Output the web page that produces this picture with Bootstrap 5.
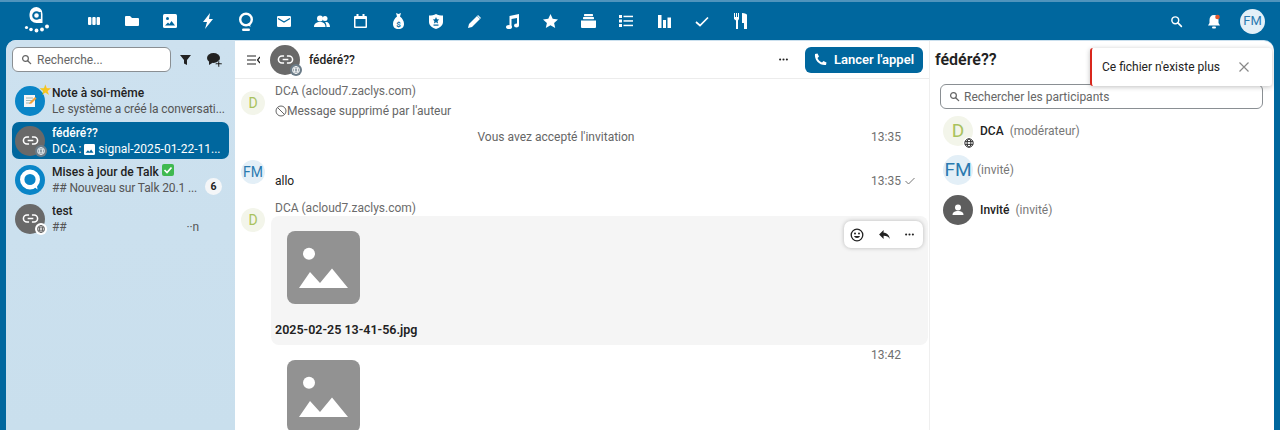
<!DOCTYPE html>
<html lang="fr">
<head>
<meta charset="utf-8">
<title>Talk</title>
<link href="https://cdn.jsdelivr.net/npm/bootstrap@5.3.0/dist/css/bootstrap.min.css" rel="stylesheet">
<style>
html,body{height:430px;overflow:hidden}
body{background:#00679e;font-family:Roboto,"Liberation Sans",sans-serif;font-size:12px;color:#222;border-top:2px solid #4f94bd}
.topbar{height:38px;color:#fff}
.logo-cell{width:75px}
.app-cell{width:38px;height:38px}
.right-cell{width:38px;height:38px}
.right-zone{padding-right:15px}
.me-av{width:25px;height:25px;border-radius:50%;background:#e3f0f8;color:#2a7ab0;font-size:13px}
.bell-gap{margin-right:7px}
.shell{height:390px;margin:0 6px;background:#cbe0ee;border-radius:10px 10px 0 0;overflow:hidden;position:relative}
.side{width:229px;flex:none;padding:7px 6px 0 6px;background:linear-gradient(#cde1ef,#c9dfed)}
.side-search{height:25px;width:159px;flex:none;border:1px solid #8a8f93;border-radius:6px;background:#fff;color:#666;padding-left:8px;gap:5px;font-size:12px}
.side-tools{height:25px}
.tool-cell{width:29px;flex:none}
.conv{height:37px;border-radius:7px;margin-top:2px;padding:0 6px 0 3px;gap:7px;color:#222}
.conv-first{margin-top:10px;padding-right:0}
.conv.on{background:#00679e;color:#fff;margin-top:3px}
.conv-sub{color:#555;font-size:12px;line-height:16px;white-space:nowrap;letter-spacing:-.12px}
.conv.on .conv-sub{color:#fff;letter-spacing:0}
.conv-title{font-weight:500;font-size:12px;line-height:16px;white-space:nowrap}
.round30{width:30px;height:30px;border-radius:50%;flex:none;position:relative}
.grey-av{background:#696969;color:#fff}
.blue-av{background:#0a85c7;color:#fff}
.corner{position:absolute;right:-2px;bottom:-1px;width:12px;height:12px;border-radius:50%;background:#fff;color:#555}
.corner.dark{background:#6b7c88}
.star{position:absolute;right:-7px;top:-3px;color:#f6c51e;font-size:15px;line-height:15px}
.pill{width:17px;height:17px;border-radius:50%;background:#f4f6f8;font-size:10.5px;font-weight:700;color:#222;flex:none;margin-top:14px;margin-right:1px}
.mid{width:694px;flex:none;background:#fff;margin-top:1px}
.mid-head{height:38px;flex:none;border-bottom:1px solid #ececec;padding:0 6px 0 12px}
.side-toggle{margin-right:10px}
.chat-name{margin-left:9px;font-weight:500}
.call-btn{height:26px;width:118px;border-radius:6px;background:#00679e;color:#fff;font-weight:600;font-size:13px;gap:7px;border:0}
.msgs{position:relative;padding-left:6px}
.msg-av{width:24px;height:24px;border-radius:50%;flex:none;font-size:14px}
.av-d{background:#f3f5ea;color:#a9c25d}
.av-fm{background:#e3eff7;color:#2a7ab0}
.gutter{width:34px;flex:none}
.author{color:#6b6b6b;font-size:12px;line-height:18px}
.muted-txt{color:#666;font-size:12px}
.stamp{width:57px;color:#6f6f6f;font-size:12px;flex:none;margin-right:1px}
.file-box{width:657px;height:129px;margin-left:-4px;background:#f5f5f5;border-radius:8px;padding:15px 0 0 4px;position:relative}
.thumb{margin-left:12px;display:block}
.fname{font-weight:600;font-size:12.5px;color:#222;margin-top:17px}
.msg-tools{position:absolute;right:5px;top:5px;width:79px;height:27px;background:#fff;border-radius:7px;box-shadow:0 0 4px rgba(0,0,0,.25);padding:0 8px 0 6px}
.panel{width:345px;flex:none;background:#fff;margin-top:1px;border-left:1px solid #efefef;border-top-right-radius:10px;padding-left:5px}
.panel-title{font-weight:600;font-size:16px;height:37px;color:#222}
.part-search{height:25px;width:323px;margin:6px 0 2px 5px;border:1px solid #8a8f93;border-radius:6px;color:#666;padding-left:8px;gap:4px;font-size:12px}
.part-row{height:40px;margin-left:8px;gap:6px}
.part-row.tight{gap:4px;margin-top:-1px}
.part-name{font-weight:500;color:#222;font-size:12px;margin-left:1px}
.part-role{color:#777;font-size:12px}
.av-big-d{font-size:19px}
.av-big-fm{font-size:19px}
.av-guest{background:#5e5e5e}
.globe-dark{position:absolute;right:-2px;bottom:-3px;width:12px;height:12px;color:#333;background:#fff;border-radius:50%}
.toast-box{position:absolute;left:1084px;top:8px;width:182px;height:38px;background:#fff;border-left:2px solid #d9261c;border-radius:3px;box-shadow:0 1px 5px rgba(0,0,0,.25);padding:0 23px 0 10px;color:#222;font-size:12px}
.row-h43{height:43px}.row-h30{height:30px}.row-h47{height:47px}
.first-av{margin-top:12px}
.first-txt{padding-top:3px}
.del-line{margin-top:2px}
.fm-top{margin-top:8px}
.d-top{margin-top:9px}
.author-2{height:17px;line-height:18px}
.late{height:12px;margin-top:3px;line-height:15px}
.allo-row{padding-bottom:9px}
</style>
</head>
<body>
<svg width="0" height="0" class="d-block position-absolute">
<defs>
<symbol id="i-link" viewBox="0 0 24 24"><path fill="none" stroke="currentColor" stroke-width="2.2" d="M10 7H7a5 5 0 0 0 0 10h3M14 7h3a5 5 0 0 1 0 10h-3M8 12h8"/></symbol>
<symbol id="i-globe" viewBox="0 0 12 12"><g fill="none" stroke="currentColor" stroke-width="1"><circle cx="6" cy="6" r="4.2"/><ellipse cx="6" cy="6" rx="1.9" ry="4.2"/><path d="M2 4.6h8M2 7.4h8"/></g></symbol>
<symbol id="i-search" viewBox="0 0 16 16"><circle cx="6.5" cy="6.5" r="4.2" fill="none" stroke="currentColor" stroke-width="1.8"/><path d="M9.7 9.7L14 14" stroke="currentColor" stroke-width="2" stroke-linecap="round"/></symbol>
<symbol id="i-dots" viewBox="0 0 14 4"><circle cx="2.5" cy="2" r="1.4" fill="currentColor"/><circle cx="7" cy="2" r="1.4" fill="currentColor"/><circle cx="11.5" cy="2" r="1.4" fill="currentColor"/></symbol>
<symbol id="i-image" viewBox="0 0 73 73"><rect width="73" height="73" rx="8" fill="#929292"/><circle cx="22" cy="22.700" r="6" fill="#fff"/><path d="M12 57L23 41l10 11 12-14.500L61 57z" fill="#fff"/></symbol>
</defs>
</svg>

<header class="topbar d-flex align-items-center">
  <div class="logo-cell d-flex">
    <svg width="26" height="30" viewBox="0 0 26 30" class="ms-4"><path d="M12.500 1a7 7 0 0 0-7 7v2a7 7 0 0 0 7 7h6V8a6.500 6.500 0 0 0-6-7z" fill="#fff"/><circle cx="12.500" cy="9.500" r="3.300" fill="none" stroke="#00679e" stroke-width="2"/><path d="M16 6v7" stroke="#00679e" stroke-width="1.600"/><g fill="#fff"><circle cx="2.500" cy="21.500" r="1.600"/><circle cx="7" cy="23.500" r="1.800"/><circle cx="12.500" cy="24.500" r="1.900"/><circle cx="18" cy="23.500" r="1.900"/><circle cx="23" cy="20.500" r="2"/></g></svg>
  </div>
  <nav class="d-flex align-items-center flex-grow-1">
    <div class="app-cell d-flex align-items-center justify-content-center"><svg width="14" height="12" viewBox="0 0 14 12" fill="#fff"><rect x="1" y="2" width="3.400" height="8" rx="1"/><rect x="5.300" y="2" width="3.400" height="8" rx="1"/><rect x="9.600" y="2" width="3.400" height="8" rx="1"/></svg></div>
    <div class="app-cell d-flex align-items-center justify-content-center"><svg width="14" height="12" viewBox="0 0 14 12" fill="#fff"><path d="M0 2a1 1 0 0 1 1-1h4l2 2h6a1 1 0 0 1 1 1v6a1 1 0 0 1-1 1H1a1 1 0 0 1-1-1z"/></svg></div>
    <div class="app-cell d-flex align-items-center justify-content-center"><svg width="14" height="14" viewBox="0 0 14 14"><rect width="14" height="14" rx="1.500" fill="#fff"/><circle cx="4.500" cy="4.500" r="1.500" fill="#00679e"/><path d="M2 11.500l3-3 1.500 1.500 2-3 3.500 4.500z" fill="#00679e"/></svg></div>
    <div class="app-cell d-flex align-items-center justify-content-center"><svg width="12" height="16" viewBox="0 0 12 16" fill="#fff"><path d="M8 0L1 9h4l-2 7 8-10H7z"/></svg></div>
    <div class="app-cell d-flex align-items-center justify-content-center flex-column"><svg width="16" height="19" viewBox="0 0 16 19"><circle cx="8" cy="7.500" r="5.800" fill="none" stroke="#fff" stroke-width="2.400"/><path d="M9 12l3.500 3-.5-4z" fill="#fff"/><rect x="4" y="16.500" width="8" height="2.500" rx="1.200" fill="#fff"/></svg></div>
    <div class="app-cell d-flex align-items-center justify-content-center"><svg width="14" height="11" viewBox="0 0 14 11"><rect width="14" height="11" rx="1.300" fill="#fff"/><path d="M1 2.500l6 3.500 6-3.500" fill="none" stroke="#00679e" stroke-width="1.300"/></svg></div>
    <div class="app-cell d-flex align-items-center justify-content-center"><svg width="16" height="13" viewBox="0 0 16 13" fill="#fff"><circle cx="6" cy="3.500" r="3"/><circle cx="11" cy="3.500" r="2.500"/><path d="M0 12c0-3.500 2.500-5 6-5s5.500 1.500 5.500 5zM12 7c2.500 0 4 2 4 5h-3.500c0-2-.5-4-1.500-4.800z"/></svg></div>
    <div class="app-cell d-flex align-items-center justify-content-center"><svg width="13" height="14" viewBox="0 0 13 14"><path d="M1 2h11a1 1 0 0 1 1 1v10a1 1 0 0 1-1 1H1a1 1 0 0 1-1-1V3a1 1 0 0 1 1-1z" fill="#fff"/><rect x="1.500" y="5" width="10" height="7.500" fill="#00679e"/><rect x="2.500" y="0" width="2" height="3" fill="#fff"/><rect x="8.500" y="0" width="2" height="3" fill="#fff"/></svg></div>
    <div class="app-cell d-flex align-items-center justify-content-center"><svg width="11" height="16" viewBox="0 0 11 16"><path d="M3 0l2.500 1L8 0 7 3.500c2.500 2 4 4.500 4 7.500 0 3-2 5-5.500 5S0 14 0 11c0-3 1.500-5.500 4-7.500z" fill="#fff"/><text x="5.500" y="13.500" text-anchor="middle" font-size="8" font-weight="700" fill="#00679e">$</text></svg></div>
    <div class="app-cell d-flex align-items-center justify-content-center"><svg width="14" height="15" viewBox="0 0 14 15"><path d="M0 1.500C2.500 1.500 5 1 7 0c2 1 4.500 1.500 7 1.500V8c0 3.500-3.500 6-7 7-3.500-1-7-3.500-7-7z" fill="#fff"/><path d="M7 3l1 2.200 2.300.3-1.700 1.600.4 2.300L7 8.300 5 9.400l.4-2.300-1.700-1.600L6 5.200z" fill="#00679e"/><rect x="4.500" y="10.500" width="5" height="1.200" fill="#00679e"/></svg></div>
    <div class="app-cell d-flex align-items-center justify-content-center"><svg width="13" height="13" viewBox="0 0 13 13" fill="#fff"><path d="M0 13l1-4L9 1l3 3-8 8z"/><path d="M10 0l3 3-.7.7-3-3z"/></svg></div>
    <div class="app-cell d-flex align-items-center justify-content-center"><svg width="13" height="15" viewBox="0 0 13 15" fill="#fff"><path d="M3.500 2L13 0v11.500h-2V4L5.500 5v8h-2z"/><ellipse cx="3" cy="13" rx="3" ry="2"/><ellipse cx="10.500" cy="11.500" rx="2.500" ry="2"/></svg></div>
    <div class="app-cell d-flex align-items-center justify-content-center"><svg width="15" height="14" viewBox="0 0 15 14" fill="#fff"><path d="M7.500 0l2.200 4.800 5.300.6-3.900 3.500 1.100 5.100-4.700-2.700L2.800 14l1.100-5.100L0 5.400l5.300-.6z"/></svg></div>
    <div class="app-cell d-flex align-items-center justify-content-center"><svg width="15" height="14" viewBox="0 0 15 14" fill="#fff"><rect x="3" y="0" width="9" height="2.200" rx=".6"/><rect x="2" y="3" width="11" height="2.200" rx=".6"/><path d="M0 6.500h15V13a1 1 0 0 1-1 1H1a1 1 0 0 1-1-1z"/></svg></div>
    <div class="app-cell d-flex align-items-center justify-content-center"><svg width="14" height="12" viewBox="0 0 14 12" fill="#fff"><rect y="0" width="3" height="3"/><rect x="4.500" y=".7" width="9.500" height="1.500"/><rect y="4.500" width="3" height="3"/><rect x="4.500" y="5.200" width="9.500" height="1.500"/><rect y="9" width="3" height="3"/><rect x="4.500" y="9.700" width="9.500" height="1.500"/></svg></div>
    <div class="app-cell d-flex align-items-center justify-content-center"><svg width="13" height="13" viewBox="0 0 13 13" fill="#fff"><rect width="3.500" height="13"/><rect x="5" y="5" width="3" height="8"/><rect x="9.500" y="2.500" width="3.500" height="10.500"/></svg></div>
    <div class="app-cell d-flex align-items-center justify-content-center"><svg width="14" height="11" viewBox="0 0 14 11"><path d="M1 6l4 3.500L13 1.500" fill="none" stroke="#fff" stroke-width="1.700"/></svg></div>
    <div class="app-cell d-flex align-items-center justify-content-center"><svg width="13" height="16" viewBox="0 0 13 16" fill="#fff"><path d="M0 0h1v4h1V0h1v4h1V0h1v6l-1 1.500V16H2V7.500L0 6z"/><path d="M8 0c3 0 5 1 5 2v14h-3v-6H8z"/></svg></div>
  </nav>
  <div class="right-zone d-flex align-items-center">
    <div class="right-cell d-flex align-items-center justify-content-center"><svg width="13" height="13"><use href="#i-search" color="#fff"/></svg></div>
    <div class="right-cell bell-gap d-flex align-items-center justify-content-center"><svg width="14" height="15" viewBox="0 0 14 15"><path d="M7 1c3 0 4.500 2 4.500 5v3l1.500 2.500H1L2.500 9V6C2.500 3 4 1 7 1z" fill="#fff"/><rect x="5" y="12.500" width="4" height="2" rx="1" fill="#fff"/><circle cx="10.500" cy="3" r="2.300" fill="#e2572b"/></svg></div>
    <div class="me-av d-flex align-items-center justify-content-center">FM</div>
  </div>
</header>

<main class="shell d-flex">
  <aside class="side">
    <div class="side-tools d-flex align-items-center">
      <div class="side-search d-flex align-items-center"><svg width="11" height="11"><use href="#i-search"/></svg><span>Recherche...</span></div>
      <div class="tool-cell d-flex justify-content-center"><svg width="11" height="10" viewBox="0 0 11 10"><path d="M0 0h11L7 5v5L4 8.500V5z" fill="#222"/></svg></div>
      <div class="tool-cell d-flex justify-content-center"><svg width="15" height="14" viewBox="0 0 15 14" fill="#222"><ellipse cx="6.500" cy="5" rx="6.500" ry="5"/><path d="M2 8v4l4-2.500z"/><path d="M11 8h1.500v2H15v1.500h-2.500V14H11v-2.500H8.500V10H11z" stroke="#cde1ef" stroke-width=".5"/></svg></div>
    </div>
    <div class="conv conv-first d-flex align-items-center">
      <div class="round30 blue-av d-flex align-items-center justify-content-center">
        <svg width="14" height="14" viewBox="0 0 14 14"><rect x="1" y="1" width="11" height="12" fill="#f6f6f6"/><path d="M3 4h7M3 6.500h7M3 9h4" stroke="#8aa" stroke-width=".8"/><path d="M6 10l1-2 5-5 1.500 1.500-5 5z" fill="#f2a33a"/></svg>
        <span class="star">★</span>
      </div>
      <div class="overflow-hidden"><div class="conv-title">Note à soi-même</div><div class="conv-sub">Le système a créé la conversati...</div></div>
    </div>
    <div class="conv on d-flex align-items-center">
      <div class="round30 grey-av d-flex align-items-center justify-content-center">
        <svg width="17" height="17"><use href="#i-link"/></svg>
        <span class="corner dark d-flex align-items-center justify-content-center"><svg width="10" height="10" color="#e8eef2"><use href="#i-globe"/></svg></span>
      </div>
      <div class="overflow-hidden"><div class="conv-title">fédéré??</div><div class="conv-sub">DCA : <svg width="11" height="11" viewBox="0 0 14 14"><rect width="14" height="14" rx="1.500" fill="#fff"/><path d="M2 11l3-3 2 2 2-3 3 4z" fill="#00679e"/></svg> signal-2025-01-22-11...</div></div>
    </div>
    <div class="conv d-flex align-items-center">
      <div class="round30 blue-av d-flex align-items-center justify-content-center">
        <svg width="26" height="26" viewBox="0 0 26 26"><circle cx="13" cy="12.500" r="7.800" fill="none" stroke="#fff" stroke-width="4.400"/><path d="M15 18l5.500 4.500-1-7z" fill="#fff"/></svg>
      </div>
      <div class="overflow-hidden flex-grow-1"><div class="conv-title">Mises à jour de Talk <svg width="12" height="12" viewBox="0 0 12 12" class="align-baseline"><rect width="12" height="12" rx="2" fill="#3fb950"/><path d="M2.500 6l2.500 2.500 4.500-5" fill="none" stroke="#fff" stroke-width="1.700"/></svg></div><div class="conv-sub">## Nouveau sur Talk 20.1 ...</div></div>
      <div class="pill d-flex align-items-center justify-content-center">6</div>
    </div>
    <div class="conv d-flex align-items-center">
      <div class="round30 grey-av d-flex align-items-center justify-content-center">
        <svg width="17" height="17"><use href="#i-link"/></svg>
        <span class="corner d-flex align-items-center justify-content-center"><svg width="10" height="10"><use href="#i-globe"/></svg></span>
      </div>
      <div class="overflow-hidden flex-grow-1"><div class="conv-title">test</div><div class="conv-sub d-flex justify-content-between pe-4"><span>##</span><span>··n</span></div></div>
    </div>
  </aside>

  <section class="mid d-flex flex-column">
    <div class="mid-head d-flex align-items-center">
      <svg width="13" height="10" viewBox="0 0 13 10" class="side-toggle"><path d="M0 1h9M0 5h9M0 9h9M13 2L10.500 5 13 8" fill="none" stroke="#222" stroke-width="1.200"/></svg>
      <div class="round30 grey-av d-flex align-items-center justify-content-center">
        <svg width="17" height="17"><use href="#i-link"/></svg>
        <span class="corner dark d-flex align-items-center justify-content-center"><svg width="10" height="10" color="#fff"><use href="#i-globe"/></svg></span>
      </div>
      <span class="chat-name flex-grow-1">fédéré??</span>
      <svg width="11" height="3" class="me-3"><use href="#i-dots"/></svg>
      <button class="call-btn d-flex align-items-center justify-content-center" type="button"><svg width="13" height="13" viewBox="0 0 13 13"><path d="M1 1l2.500-.5L5 3.500 3.500 5c.8 2 2.500 3.700 4.500 4.500L9.500 8l3 1.500L12 12c-6 1-12-5-11-11z" fill="#fff"/></svg>Lancer l'appel</button>
    </div>
    <div class="msgs flex-grow-1">
      <div class="d-flex row-h43">
        <div class="gutter"><div class="msg-av av-d d-flex align-items-center justify-content-center first-av">D</div></div>
        <div class="first-txt"><div class="author">DCA (acloud7.zaclys.com)</div><div class="muted-txt d-flex align-items-center del-line"><svg width="12" height="12" viewBox="0 0 12 12"><circle cx="6" cy="6" r="5" fill="none" stroke="#666"/><path d="M2.500 2.500l7 7" stroke="#666"/></svg>Message supprimé par l'auteur</div></div>
      </div>
      <div class="d-flex align-items-center row-h30">
        <div class="muted-txt text-center flex-grow-1">Vous avez accepté l'invitation</div>
        <div class="stamp">13:35</div>
      </div>
      <div class="d-flex row-h47">
        <div class="gutter"><div class="msg-av av-fm d-flex align-items-center justify-content-center fm-top">FM</div></div>
        <div class="d-flex align-items-end flex-grow-1 allo-row"><span class="flex-grow-1">allo</span><div class="stamp d-flex align-items-center gap-1">13:35 <svg width="10" height="8" viewBox="0 0 10 8"><path d="M.5 4l3 3L9.500 1" fill="none" stroke="#777"/></svg></div></div>
      </div>
      <div class="d-flex">
        <div class="gutter"><div class="msg-av av-d d-flex align-items-center justify-content-center d-top">D</div></div>
        <div class="flex-grow-1">
          <div class="author author-2">DCA (acloud7.zaclys.com)</div>
          <div class="file-box">
            <svg class="thumb" width="73" height="73"><use href="#i-image"/></svg>
            <div class="fname">2025-02-25 13-41-56.jpg</div>
            <div class="msg-tools d-flex align-items-center justify-content-between">
              <svg width="14" height="14" viewBox="0 0 14 14"><circle cx="7" cy="7" r="5.800" fill="none" stroke="#222" stroke-width="1.300"/><circle cx="5" cy="5.500" r="1" fill="#222"/><circle cx="9" cy="5.500" r="1" fill="#222"/><path d="M4 8c.7 2.500 5.300 2.500 6 0z" fill="#222"/></svg>
              <svg width="11" height="9" viewBox="0 0 12 10"><path d="M5 0v3c4 0 6 2.500 7 7-1.500-2.500-3.500-3.500-7-3.500V10L0 5z" fill="#222"/></svg>
              <svg width="11" height="3"><use href="#i-dots"/></svg>
            </div>
          </div>
          <div class="d-flex justify-content-end late"><div class="stamp">13:42</div></div>
          <svg class="thumb" width="73" height="73"><use href="#i-image"/></svg>
        </div>
      </div>
    </div>
  </section>

  <aside class="panel">
    <div class="panel-title d-flex align-items-center">fédéré??</div>
    <div class="part-search d-flex align-items-center"><svg width="11" height="11"><use href="#i-search"/></svg><span>Rechercher les participants</span></div>
    <div>
      <div class="part-row d-flex align-items-center">
        <div class="round30 av-d av-big-d d-flex align-items-center justify-content-center">D<span class="globe-dark d-flex"><svg width="12" height="12"><use href="#i-globe"/></svg></span></div>
        <span class="part-name">DCA</span><span class="part-role">(modérateur)</span>
      </div>
      <div class="part-row tight d-flex align-items-center">
        <div class="round30 av-fm av-big-fm d-flex align-items-center justify-content-center">FM</div>
        <span class="part-role">(invité)</span>
      </div>
      <div class="part-row d-flex align-items-center">
        <div class="round30 av-guest d-flex align-items-center justify-content-center"><svg width="14" height="14" viewBox="0 0 14 14" fill="#fff"><circle cx="7" cy="4.500" r="3"/><path d="M1.500 12c0-3 2.500-4 5.500-4s5.500 1 5.500 4z"/></svg></div>
        <span class="part-name">Invité</span><span class="part-role">(invité)</span>
      </div>
    </div>
  </aside>

  <div class="toast-box d-flex align-items-center justify-content-between">
    <span>Ce fichier n'existe plus</span>
    <svg width="10" height="10" viewBox="0 0 10 10"><path d="M.5.5l9 9M9.500.5l-9 9" stroke="#888" stroke-width="1.200"/></svg>
  </div>
</main>
</body>
</html>
